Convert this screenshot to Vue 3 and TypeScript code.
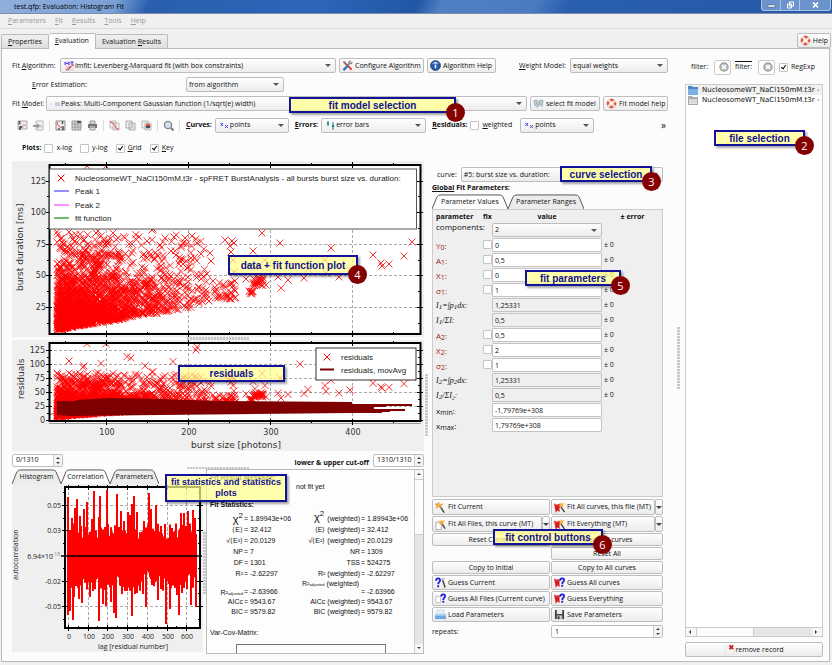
<script setup lang="ts">
import { ref } from 'vue'

interface Point { x: number; y: number }
interface Param { base: string; sub: string; rest?: string; sub2?: string; kind: 'fit' | 'calc' | 'range'; value: string }
interface Stat { label: string; sub?: string; sup?: string; value: string; label2: string; tail2?: string; value2: string; big?: boolean }

function createRandom(seed: number): () => number {
  let s = seed
  return () => {
    s = (s * 1664525 + 1013904223) % 4294967296
    return s / 4294967296
  }
}

const menus = ['Parameters', 'Fit', 'Results', 'Tools', 'Help']

// Bursts in plot coordinates, the sparse ones are listed one by one.
const outliers: number[][] = [
  [87, 166], [106, 166], [300, 212], [127, 195], [131, 198], [173, 206], [196, 180], [197, 174], [69, 205], [84, 216], [83, 219],
  [101, 210], [145, 216], [262, 233], [280, 243], [331, 248], [253, 251], [412, 242], [404, 256], [389, 264],
  [381, 263], [382, 266], [373, 255], [304, 278], [278, 277], [288, 280], [281, 288], [339, 277], [235, 281],
  [246, 279], [225, 240], [232, 241], [234, 243], [230, 246], [231, 252], [325, 260], [265, 260], [255, 267],
  [308, 269], [326, 273], [350, 270], [233, 260], [234, 272], [57, 232], [63, 244], [69, 232], [73, 239], [96, 233],
  [98, 231], [101, 236], [113, 233], [106, 245], [108, 244], [84, 240], [88, 244], [139, 237], [147, 241], [152, 230],
  [153, 229], [160, 245], [165, 238], [174, 237], [185, 238], [192, 236], [197, 243], [129, 244], [132, 244],
  [143, 255], [149, 252], [150, 255], [158, 256], [118, 252], [120, 258], [171, 251], [176, 255], [201, 254],
  [210, 253], [211, 261], [191, 258], [183, 264], [207, 274], [213, 281], [206, 290], [209, 301], [187, 268],
]

const points: Point[] = (() => {
  const rnd = createRandom(42)
  const list: Point[] = outliers.map(([x, y]) => ({ x, y }))
  while (list.length < 2100) {
    const x = 57 - Math.log(1 - rnd()) * 48
    if (x > 208) continue
    const floor = 330 - (x - 57) * 0.165
    const y = floor + Math.log(1 - rnd()) * (22 + (x - 57) * 0.05)
    if (y < 234) continue
    list.push({ x, y })
  }
  for (let i = 0; i < 34; i++) list.push({ x: 213 + rnd() * 24, y: 282 + rnd() * 17 })
  for (let i = 0; i < 26; i++) list.push({ x: 253 + rnd() * 13, y: 276 + rnd() * 12 })
  for (let i = 0; i < 8; i++) list.push({ x: 248 + rnd() * 5, y: 290 + rnd() * 4 })
  for (let i = 0; i < 30; i++) list.push({ x: 78 + rnd() * 22, y: 250 + rnd() * 16 })
  for (let i = 0; i < 10; i++) list.push({ x: 64 + rnd() * 12, y: 247 + rnd() * 20 })
  return list
})()

function crosses(list: Point[], r: number): string {
  return list
    .map(({ x, y }) => `M${(x - r).toFixed(1)} ${(y - r).toFixed(1)}l${2 * r} ${2 * r}m0 ${-2 * r}l${-2 * r} ${2 * r}`)
    .join('')
}

const burstPath = crosses(points, 3.5)
const residualPath = crosses(points.map(({ x, y }) => ({ x, y: 420.5 - (338.5 - y) * 0.4455 })), 3.5)

const correlationPath = (() => {
  const rnd = createRandom(7)
  let d = ''
  for (let x = 69; x < 197; x += 1) {
    d += `M${x} ${(542 - rnd() * 18).toFixed(1)}V${(570 + rnd() * 22).toFixed(1)}`
  }
  const up: number[][] = [[68, 498], [72, 519], [75, 509], [77, 500], [80, 517], [84, 510], [87, 503], [92, 520], [94, 492], [99, 518],
    [100, 497], [107, 491], [117, 495], [119, 528], [121, 512], [124, 522], [128, 513], [130, 516], [132, 505], [134, 497], [137, 513],
    [144, 522], [149, 494], [151, 510], [156, 506], [161, 527], [170, 529], [172, 529], [181, 514], [184, 514], [188, 512], [193, 511], [195, 519]]
  const down: number[][] = [[68, 616], [70, 612], [73, 621], [74, 598], [79, 600], [82, 604], [87, 587], [90, 598], [99, 622], [103, 605],
    [106, 607], [111, 603], [114, 614], [116, 619], [122, 595], [125, 592], [132, 617], [135, 595], [137, 594], [143, 595], [146, 608],
    [152, 586], [158, 601], [166, 625], [170, 610], [177, 596], [179, 616], [182, 594], [191, 606], [196, 608]]
  for (const [x, y] of up) d += `M${x} 557V${y}`
  for (const [x, y] of down) d += `M${x} 557V${y}`
  return d
})()

const xMajor = [106, 188, 270, 352]
const xMinor = [65, 147, 229, 311, 393]
const xLabels = [100, 200, 300, 400]
const burstTicks = [{ y: 181, t: '125' }, { y: 212, t: '100' }, { y: 244, t: '75' }, { y: 275, t: '50' }, { y: 307, t: '25' }]
const burstMinor = [196, 228, 260, 291, 323]
const residualTicks = [{ y: 350, t: '125' }, { y: 364, t: '100' }, { y: 378, t: '75' }, { y: 392, t: '50' }, { y: 406, t: '25' }, { y: 420, t: '0' }]
const residualMinor = [357, 371, 385, 399, 413]
const lagTicks = [0, 1, 2, 3, 4, 5, 6].map((n) => ({ x: 68 + Math.round(n * 19.7), t: String(n * 100) }))
const corrTicks = [{ y: 506, t: '0.05' }, { y: 531, t: '0.03' }, { y: 582, t: '-0.02' }, { y: 607, t: '-0.05' }]
const corrMinor = [493, 519, 544, 569, 594, 620]

const params = ref<Param[]>([
  { base: 'Y', sub: '0', rest: ':', kind: 'fit', value: '0' },
  { base: 'A', sub: '1', rest: ':', kind: 'fit', value: '0,5' },
  { base: 'X', sub: '1', rest: ':', kind: 'fit', value: '0' },
  { base: 'σ', sub: '1', rest: ':', kind: 'fit', value: '1' },
  { base: 'I', sub: '1', rest: '=∫p', sub2: '1', kind: 'calc', value: '1,25331' },
  { base: 'I', sub: '1', rest: '/ΣI:', kind: 'calc', value: '0,5' },
  { base: 'A', sub: '2', rest: ':', kind: 'fit', value: '0,5' },
  { base: 'X', sub: '2', rest: ':', kind: 'fit', value: '2' },
  { base: 'σ', sub: '2', rest: ':', kind: 'fit', value: '1' },
  { base: 'I', sub: '2', rest: '=∫p', sub2: '2', kind: 'calc', value: '1,25331' },
  { base: 'I', sub: '2', rest: '/ΣI₂:', kind: 'calc', value: '0,5' },
  { base: 'x', sub: 'min', rest: ':', kind: 'range', value: '-1,79769e+308' },
  { base: 'x', sub: 'max', rest: ':', kind: 'range', value: '1,79769e+308' },
])

const stats: Stat[] = [
  { label: 'χ', sup: '2', value: '1.89943e+06', label2: 'χ', tail2: '(weighted)', value2: '1.89943e+06', big: true },
  { label: '⟨E⟩', value: '32.412', label2: '⟨E⟩', tail2: '(weighted)', value2: '32.412' },
  { label: '√⟨E²⟩', value: '20.0129', label2: '√⟨E²⟩', tail2: '(weighted)', value2: '20.0129' },
  { label: 'NP', value: '7', label2: 'NR', value2: '1309' },
  { label: 'DF', value: '1301', label2: 'TSS', value2: '524275' },
  { label: 'R²', value: '-2.62297', label2: 'R²', tail2: '(weighted)', value2: '-2.62297' },
  { label: 'R²', sub: 'adjusted', value: '-2.63966', label2: 'R²', tail2: '(weighted)', value2: '-2.63966' },
  { label: 'AICc', value: '9543.67', label2: 'AICc', tail2: '(weighted)', value2: '9543.67' },
  { label: 'BIC', value: '9579.82', label2: 'BIC', tail2: '(weighted)', value2: '9579.82' },
]

const actions = [
  { text: 'Fit Current', icon: 'wand', menu: false },
  { text: 'Fit All curves, this file (MT)', icon: 'wand-red', menu: true },
  { text: 'Fit All Files, this curve (MT)', icon: 'wand-file', menu: true },
  { text: 'Fit Everything (MT)', icon: 'wand-red', menu: true },
  { text: 'Reset Current', icon: '', menu: false },
  { text: 'Reset All curves', icon: '', menu: false },
  { text: '', icon: '', menu: false },
  { text: 'Reset All', icon: '', menu: false },
  { text: 'Copy to Initial', icon: '', menu: false },
  { text: 'Copy to All curves', icon: '', menu: false },
  { text: 'Guess Current', icon: 'guess', menu: false },
  { text: 'Guess All curves', icon: 'guess-red', menu: false },
  { text: 'Guess All Files (Current curve)', icon: 'guess-file', menu: false },
  { text: 'Guess Everything', icon: 'guess-red', menu: false },
  { text: 'Load Parameters', icon: 'load', menu: false },
  { text: 'Save Parameters', icon: 'save', menu: false },
]

const tools = ['disk-plot', 'sheet-plot', '', 'disk-curve', 'disk-grid', 'printer', '', 'page-curve', 'pages', 'page-color', '', 'lens', '']
const toolNames: Record<string, string> = {
  'disk-plot': 'Save data', 'sheet-plot': 'Export data', 'disk-curve': 'Save plot', 'disk-grid': 'Save table',
  printer: 'Print', 'page-curve': 'Copy plot', pages: 'Copy data', 'page-color': 'Copy image', lens: 'Zoom',
}
const files = [{ name: 'NucleosomeWT_NaCl150mM.t3r -', icon: 'folder-blue' }, { name: 'NucleosomeWT_NaCl150mM.t3r -', icon: 'folder-gray' }]
const xlog = ref(false)
const ylog = ref(false)
const grid = ref(true)
const key = ref(true)
const weighted = ref(false)
const regexp = ref(true)
</script>

<template>
  <div class="window">
    <svg class="sprite" aria-hidden="true">
      <symbol id="app" viewBox="0 0 10 10"><rect width="10" height="10" fill="#f6eef6" /><path d="M1 9L4 6L6 7L9 1" fill="none" stroke="#e0305a" stroke-width="1.3" /><path d="M1 4L4 5L9 4" fill="none" stroke="#8a7ae0" /></symbol>
      <symbol id="algo" viewBox="0 0 11 10"><path d="M1 0h9v10H1z" fill="#f6d9de" /><path d="M1 4V1l2 2l2-2v3M6.500 1h3M8 1v3" fill="none" stroke="#3a3ae8" /><path d="M2 9C4 9 4 6 6 6S7 4 10 4M4 9.500L7 5" fill="none" stroke="#985070" /></symbol>
      <symbol id="model" viewBox="0 0 11 10"><path d="M5 4h5M5 6h5" stroke="#88aad8" /><path d="M1 4v2" stroke="#ccc" /></symbol>
      <symbol id="config" viewBox="0 0 12 12"><path d="M2 2L10.500 10.500" stroke="#d63a35" stroke-width="2" /><path d="M1 2L2.500 1L4.500 3L3 4.500z" fill="#888" /><path d="M9.500 .8L7.500 2.500V4H9.500L11.300 2.500M8.500 3.500L5.500 6.500" fill="none" stroke="#777" stroke-width="1.300" /><path d="M6 6.500L1.500 11" stroke="#3470c8" stroke-width="2.500" /></symbol>
      <symbol id="info" viewBox="0 0 12 12"><circle cx="6" cy="6" r="5.300" fill="#2857a8" stroke="#183c78" /><path d="M2 4Q6-1 10 4Q6 6 2 4" fill="#6d98dc" /><path d="M6 5.500V9M6 2.500V4" stroke="#fff" stroke-width="1.700" /></symbol>
      <symbol id="select" viewBox="0 0 12 12"><path d="M1 3l1 5l3 2l2-3l3 2l1-6l-3-1l-2 3l-2-3z" fill="#c3d5e5" stroke="#8598a8" stroke-width=".8" /><path d="M3 4l2 4M8.500 4L7 7" stroke="#b59d5f" /></symbol>
      <symbol id="buoy" viewBox="0 0 12 12"><circle cx="6" cy="6" r="3.800" fill="none" stroke="#f3e8e2" stroke-width="2.600" /><circle cx="6" cy="6" r="3.800" fill="none" stroke="#e8562c" stroke-width="2.600" stroke-dasharray="3.600 2.369" stroke-dashoffset="1.800" /><circle cx="6" cy="6" r="5.200" fill="none" stroke="#b88" stroke-width=".4" /></symbol>
      <symbol id="disk-plot" viewBox="0 0 11 11"><path d="M1 1h9v8H1z" fill="#eee" stroke="#aaa" /><path d="M2.500 1v3.500M2.500 7h3M3 10V7" stroke="#555" stroke-width="1.800" /><path d="M5 5h4M5 7l4-2" stroke="#daa" /></symbol>
      <symbol id="sheet-plot" viewBox="0 0 11 11"><path d="M3 1h7v9H3z" fill="#f2f2f2" stroke="#bbb" /><path d="M0 5h4V3l3 3l-3 3V7H0z" fill="#999" /><path d="M6 5l3 2" stroke="#c88" /></symbol>
      <symbol id="disk-curve" viewBox="0 0 11 11"><path d="M1 1h9v9H1z" fill="#eee" stroke="#888" /><path d="M2 2q1 5 3 5t4 3" fill="none" stroke="#d55" /><path d="M7.500 1v3M8 6v4M4 8v2" stroke="#555" stroke-width="1.500" /></symbol>
      <symbol id="disk-grid" viewBox="0 0 11 11"><path d="M1 1h9v9H1z" fill="#ddd" stroke="#999" /><path d="M1 4h9M4 1v9M7 4v6M1 7h9" stroke="#999" /><path d="M6 2h4" stroke="#555" stroke-width="2" /></symbol>
      <symbol id="printer" viewBox="0 0 11 11"><path d="M3 1h5v3H3zM3 7h5v3H3z" fill="#ddd" stroke="#999" /><path d="M1 4h9v4H1z" fill="#777" /><path d="M3 7h5" stroke="#ddd" /></symbol>
      <symbol id="page-curve" viewBox="0 0 11 11"><path d="M1 1h6v7H1zM4 3h6v7H4z" fill="#f2f2f2" stroke="#bbb" /><path d="M1 2q4 0 5 4t4 3" fill="none" stroke="#e44" /></symbol>
      <symbol id="pages" viewBox="0 0 11 11"><path d="M1 1h6v7H1zM4 3h6v7H4z" fill="#eee" stroke="#aaa" /><path d="M5 5h4M5 7h4" stroke="#ccc" /></symbol>
      <symbol id="page-color" viewBox="0 0 11 11"><path d="M1 1h6v7H1zM4 3h6v7H4z" fill="#f2f2f2" stroke="#bbb" /><path d="M4.500 6a2.500 2.500 0 0 1 5 0z" fill="#e55a22" /><path d="M4.500 6a2.500 2.500 0 0 0 5 0z" fill="#446" /></symbol>
      <symbol id="lens" viewBox="0 0 11 11"><circle cx="5" cy="5" r="3.600" fill="#cfe0f5" stroke="#888" stroke-width="1.400" /><path d="M8 8l2.500 2.500" stroke="#777" stroke-width="2" /></symbol>
      <symbol id="points" viewBox="0 0 11 10"><path d="M1.500 2l2.500 3M4 2L1.500 5M6 4l3 3M9 4L6 7" stroke="#4646e8" fill="none" /></symbol>
      <symbol id="bars" viewBox="0 0 11 10"><path d="M3 0v5M8 1v8" stroke="#188080" /><path d="M2 2.500h2M7 5h2" stroke="#188080" stroke-width="2" /></symbol>
      <symbol id="clear" viewBox="0 0 10 10"><circle cx="5" cy="5" r="4.700" fill="#999" /><circle cx="5" cy="5" r="3.500" fill="#c4c4c4" /><path d="M3.200 3.200l3.600 3.600m0-3.600L3.200 6.800" stroke="#fff" stroke-width="1.400" /></symbol>
      <symbol id="folder-blue" viewBox="0 0 10 9"><path d="M0 0h4l1 1h5v8H0z" fill="#4e86c0" /><path d="M0 3h10v6H0z" fill="#7cb0e2" /></symbol>
      <symbol id="folder-gray" viewBox="0 0 10 9"><path d="M0 0h4l1 1h5v8H0z" fill="#aaa" /><path d="M1 3h8v5H1z" fill="#e4e4e4" /><path d="M1 4h8M1 6h8" stroke="#bbb" stroke-width=".5" /></symbol>
      <symbol id="wand" viewBox="0 0 12 12"><path d="M5 4l5 7.500" stroke="#444" stroke-width="1.600" /><path d="M4 0l1 3l4-1l-3 2l1 3l-3-2l-3 2l1-3l-2-2h3z" fill="#f2b23c" stroke="#d08332" stroke-width=".5" /></symbol>
      <symbol id="wand-red" viewBox="0 0 12 12"><path d="M6.500 4l5 7" stroke="#444" stroke-width="1.500" /><path d="M7.500 0l1 2l3-1l-2 3l2 2L8.500 5L6 7V4L4 2h3z" fill="#efb247" /><path d="M0 1.500l3 1.500l3-1v9l-2-2l-2 3z" fill="#e62424" /><path d="M2 5l4 5M2 9l4-4" stroke="#911" stroke-width=".7" /></symbol>
      <symbol id="wand-file" viewBox="0 0 12 12"><path d="M1 3.500h4l2 2v6H1z" fill="#fff" stroke="#aaa" /><path d="M7 4l4 6.500" stroke="#444" stroke-width="1.500" /><path d="M7 0l1 2l3-1l-2 3l1 3l-3-2l-2 2V4L4 2h3z" fill="#efb247" /></symbol>
      <symbol id="guess" viewBox="0 0 12 12"><path d="M8 2l3 9.500" stroke="#444" stroke-width="1.600" /><path d="M6.500 2l4-1l-1 3" fill="#ddd" stroke="#aaa" stroke-width=".5" /><path d="M1.200 4.200C1.200 .8 5.500 .8 5.500 3.500S3.500 5 3.500 8M3.500 9v2.200" fill="none" stroke="#1b22df" stroke-width="2" /></symbol>
      <symbol id="guess-red" viewBox="0 0 12 12"><path d="M0 1.500l3 1.500l3-1v9l-2-2l-2 3z" fill="#e62424" /><path d="M2 5l4 5M2 9l4-4" stroke="#911" stroke-width=".7" /><path d="M6.700 4C6.700 .8 11 .8 11 3.300S9 4.700 9 7.500M9 8.500v2.200" fill="none" stroke="#1b22df" stroke-width="2" /></symbol>
      <symbol id="guess-file" viewBox="0 0 12 12"><path d="M1 3.500h3l2 2v5H1z" fill="#fff" stroke="#bbb" /><path d="M6.700 4C6.700 .8 11 .8 11 3.300S9 4.700 9 7.500M9 8.500v2.200" fill="none" stroke="#1b22df" stroke-width="2" /></symbol>
      <symbol id="load" viewBox="0 0 12 12"><path d="M2 1h8v6H2z" fill="#e6eef5" stroke="#b5c3cf" stroke-width=".5" /><path d="M0 6h12v5H0z" fill="#6fa9e0" /><path d="M0 6h12v1.500H0z" fill="#a9cff2" /></symbol>
      <symbol id="save" viewBox="0 0 12 12"><path d="M1 1h10v10H1z" fill="#3c4048" /><path d="M3 1h6v4.500H3z" fill="#e8e8ee" /><path d="M3 7h6v4H3z" fill="#c5c8cf" /><path d="M4 8h2v3H4z" fill="#333" /></symbol>
      <symbol id="remove" viewBox="0 0 12 12"><path d="M1 2h6l4 4v5H1z" fill="#f2f2f2" stroke="#ddd" stroke-width=".5" /><path d="M6 1.500l4 4m0-4l-4 4" stroke="#d21f1f" stroke-width="2" /></symbol>
    </svg>

    <header class="titlebar">
      <svg class="app-icon"><use href="#app" /></svg>
      <h1>test.qfp: Evaluation: Histogram Fit</h1>
      <div class="window-buttons">
        <button aria-label="Minimize"><svg viewBox="0 0 9 8"><rect x="1" y="4" width="7" height="2" fill="#fff" stroke="#445" stroke-width=".4" /></svg></button>
        <button aria-label="Restore"><svg viewBox="0 0 9 8"><path d="M3.500 1h4v4h-4zM1.500 3h4v4h-4z" fill="none" stroke="#fff" /></svg></button>
        <button class="close" aria-label="Close"><svg viewBox="0 0 9 8"><path d="M2 1.500l5 5m0-5l-5 5" stroke="#fff" stroke-width="1.700" /></svg></button>
      </div>
    </header>

    <nav class="menubar">
      <a v-for="m in menus" :key="m" href="#"><u>{{ m[0] }}</u>{{ m.slice(1) }}</a>
    </nav>

    <div class="tabs">
      <button class="tab"><u>P</u>roperties</button>
      <button class="tab active"><u>E</u>valuation</button>
      <button class="tab">Evaluation <u>R</u>esults</button>
      <button class="btn help"><svg class="icon"><use href="#buoy" /></svg>Help</button>
    </div>

    <main class="page">
      <section class="evaluation">
        <div class="row algorithm">
          <label for="algorithm">Fit <u>A</u>lgorithm:</label>
          <span class="combo grow with-icon"><svg class="combo-icon"><use href="#algo" /></svg><select id="algorithm"><option>lmfit: Levenberg-Marquard fit (with box constraints)</option></select></span>
          <button class="btn configure"><svg class="icon"><use href="#config" /></svg>Configure Algorithm</button>
          <button class="btn algorithm-help"><svg class="icon"><use href="#info" /></svg>Algorithm Help</button>
          <label class="weight-label" for="weight"><u>W</u>eight Model:</label>
          <span class="combo wide"><select id="weight"><option>equal weights</option></select></span>
        </div>
        <div class="row estimation">
          <label for="estimation"><u>E</u>rror Estimation:</label>
          <span class="combo wide"><select id="estimation"><option>from algorithm</option></select></span>
        </div>
        <div class="row model">
          <label for="model-select">Fit <u>M</u>odel:</label>
          <span class="combo grow with-icon"><svg class="combo-icon"><use href="#model" /></svg><select id="model-select"><option>Peaks: Multi-Component Gaussian function (1/sqrt(e) width)</option></select></span>
          <button class="btn select-model"><svg class="icon"><use href="#select" /></svg>select fit model</button>
          <button class="btn model-help"><svg class="icon"><use href="#buoy" /></svg>Fit model help</button>
        </div>
        <div class="row plotbar">
          <div class="tools">
            <template v-for="(t, i) in tools" :key="i">
              <button v-if="t" class="tool" :aria-label="toolNames[t]"><svg><use :href="'#' + t" /></svg></button>
              <i v-else class="rule"></i>
            </template>
          </div>
          <label class="strong" for="curves"><u>C</u>urves:</label>
          <span class="combo with-icon curves"><svg class="combo-icon"><use href="#points" /></svg><select id="curves"><option>points</option></select></span>
          <label class="strong" for="errors"><u>E</u>rrors:</label>
          <span class="combo with-icon errors"><svg class="combo-icon"><use href="#bars" /></svg><select id="errors"><option>error bars</option></select></span>
          <label class="strong" for="residuals"><u>R</u>esiduals:</label>
          <label class="check weighted"><input v-model="weighted" type="checkbox" /><span><u>w</u>eighted</span></label>
          <span class="combo with-icon curves"><svg class="combo-icon"><use href="#points" /></svg><select id="residuals"><option>points</option></select></span>
          <button class="more" aria-label="More">»</button>
        </div>
        <div class="row plots">
          <b>Plots:</b>
          <label class="check"><input v-model="xlog" type="checkbox" />x-log</label>
          <label class="check"><input v-model="ylog" type="checkbox" />y-log</label>
          <label class="check"><input v-model="grid" type="checkbox" /><span><u>G</u>rid</span></label>
          <label class="check"><input v-model="key" type="checkbox" /><span><u>K</u>ey</span></label>
        </div>

        <div class="workspace">
          <div class="graphs">
            <svg class="plot" viewBox="12 161 412 176">
              <defs><clipPath id="burst-clip"><rect x="49" y="165" width="371" height="169" /></clipPath></defs>
              <rect x="12" y="161" width="412" height="176" fill="#efefef" />
              <rect x="49" y="165" width="371" height="169" fill="#fff" />
              <g class="gridlines">
                <path v-for="x in xMajor" :key="x" :d="`M${x}.5 165V334`" />
                <path v-for="t in burstTicks" :key="t.y" :d="`M49 ${t.y}.5H420`" />
              </g>
              <path :d="burstPath" class="crosses" clip-path="url(#burst-clip)" />
              <rect x="49.500" y="165" width="371" height="169" class="frame" />
              <g class="ticks">
                <path v-for="x in xMajor" :key="x" :d="`M${x}.5 162v6m0 163v6`" />
                <path v-for="x in xMinor" :key="x" :d="`M${x}.5 163v3m0 166v3`" />
                <path v-for="t in burstTicks" :key="t.y" :d="`M46 ${t.y}.5h6m365 0h6`" />
                <path v-for="y in burstMinor" :key="y" :d="`M47 ${y}.5h3m368 0h3`" />
              </g>
              <rect x="49.500" y="169" width="367" height="60" fill="#fff" stroke="#555" />
              <path d="M57.500 174.500l7 7m0-7l-7 7" class="marker" />
              <path d="M54 191h15" stroke="#5656ff" stroke-width="1.300" /><path d="M54 205h15" stroke="#ff56ff" stroke-width="1.300" /><path d="M54 218h15" stroke="#209a20" stroke-width="1.300" />
              <g class="legend">
                <text x="75" y="181">NucleosomeWT_NaCl150mM.t3r - spFRET BurstAnalysis - all bursts burst size vs. duration:</text>
                <text x="75" y="194">Peak 1</text><text x="75" y="208">Peak 2</text><text x="75" y="221">fit function</text>
              </g>
              <g class="axis end"><text v-for="t in burstTicks" :key="t.y" x="46" :y="t.y + 3">{{ t.t }}</text></g>
              <text class="axis-title" transform="translate(23 291) rotate(-90)">burst duration [ms]</text>
            </svg>
            <i class="grip horizontal"></i>
            <svg class="plot" viewBox="12 340 412 111">
              <defs><clipPath id="residual-clip"><rect x="49" y="343" width="371" height="78" /></clipPath></defs>
              <rect x="12" y="340" width="412" height="111" fill="#efefef" />
              <rect x="49" y="343" width="371" height="78" fill="#fff" />
              <g class="gridlines">
                <path v-for="x in xMajor" :key="x" :d="`M${x}.5 343V421`" />
                <path v-for="t in residualTicks" :key="t.y" :d="`M49 ${t.y}.5H420`" />
              </g>
              <path :d="residualPath" class="crosses" clip-path="url(#residual-clip)" />
              <path d="M57 401H76V400L110 398L160 399L220 401L352 402V404H412V406H386V407H374V409H405V411H390V412H382V413H350L160 415L70 416L57 415V413L49 415V414L57 413z" fill="#7f0000" />
              <rect x="49.500" y="343" width="371" height="78" class="frame" />
              <path d="M49 423.500H421" stroke="#999" />
              <g class="ticks">
                <path v-for="x in xMajor" :key="x" :d="`M${x}.5 340v6m0 73v6`" />
                <path v-for="x in xMinor" :key="x" :d="`M${x}.5 341v3m0 76v3`" />
                <path v-for="t in residualTicks" :key="t.y" :d="`M46 ${t.y}.5h6m365 0h6`" />
                <path v-for="y in residualMinor" :key="y" :d="`M47 ${y}.5h3m368 0h3`" />
              </g>
              <rect x="316" y="348" width="100" height="32" fill="#fff" stroke="#333" />
              <path d="M323.500 353.500l7 7m0-7l-7 7" class="marker" /><path d="M320 369.500h14" stroke="#7f0000" stroke-width="2" />
              <g class="legend"><text x="341" y="360">residuals</text><text x="341" y="373">residuals, movAvg</text></g>
              <g class="axis end"><text v-for="t in residualTicks" :key="t.y" x="45" :y="t.y + 3">{{ t.t }}</text></g>
              <g class="axis middle"><text v-for="(x, i) in xMajor" :key="x" :x="x + 1" y="435">{{ xLabels[i] }}</text></g>
              <text class="axis-title middle" x="236" y="448">burst size [photons]</text>
              <text class="axis-title" transform="translate(24 399) rotate(-90)">residuals</text>
            </svg>

            <div class="cutoff">
              <span class="spin"><input type="text" value="0/1310" aria-label="lower cut-off" /><i></i></span>
              <b>lower &amp; upper cut-off</b>
              <span class="spin"><input type="text" value="1310/1310" aria-label="upper cut-off" /><i></i></span>
            </div>

            <i class="grip horizontal low"></i>
            <div class="statistics">
              <div class="stat-plots">
                <div class="slant-tabs">
                  <button class="slant" v-for="(t, i) in ['Histogram', 'Correlation', 'Parameters']" :key="t" :class="{ active: i === 1 }">
                    <svg viewBox="0 0 50 16" preserveAspectRatio="none"><path d="M0 16L5 3Q6 1 9 1H41Q44 1 45 3L50 16" /></svg><span>{{ t }}</span>
                  </button>
                </div>
                <svg class="plot" viewBox="12 485 191 168">
                  <rect x="12" y="485" width="191" height="168" fill="#efefef" />
                  <rect x="65" y="488" width="135" height="141" fill="#fff" />
                  <g class="gridlines">
                    <path v-for="t in lagTicks" :key="t.x" :d="`M${t.x}.5 488V629`" />
                    <path v-for="t in corrTicks" :key="t.y" :d="`M65 ${t.y}.5H200`" />
                  </g>
                  <path :d="correlationPath" stroke="#f00" stroke-width="2" />
                  <rect x="65" y="488" width="135" height="141" class="frame" />
                  <path d="M61 557H202" stroke="#000" stroke-width="1.500" />
                  <g class="ticks">
                    <path v-for="t in lagTicks" :key="t.x" :d="`M${t.x}.5 486v5m0 135v6`" />
                    <path v-for="t in lagTicks.slice(1)" :key="t.x" :d="`M${t.x - 10}.5 486v3m0 138v3`" />
                    <path v-for="t in corrTicks" :key="t.y" :d="`M62 ${t.y}.5h6m129 0h6`" />
                    <path v-for="y in corrMinor" :key="y" :d="`M63 ${y}.5h3m132 0h3`" />
                  </g>
                  <g class="small-axis end">
                    <text v-for="t in corrTicks" :key="t.y" x="61" :y="t.y + 3">{{ t.t }}</text>
                    <text x="53" y="560">6.94×10</text><text x="60" y="557" class="power">-18</text>
                  </g>
                  <g class="small-axis middle">
                    <text v-for="t in lagTicks" :key="t.x" :x="t.x + 1" y="640">{{ t.t }}</text>
                    <text x="133" y="650">lag [residual number]</text>
                  </g>
                  <text class="small-axis" transform="translate(18 581) rotate(-90)">autocorrelation</text>
                </svg>
              </div>
              <i class="grip vertical stat-grip"></i>
              <div class="report">
                <div class="report-text">
                  <b>Fit Result Message:</b>
                  <p class="message">not fit yet</p>
                  <b>Fit Statistics:</b>
                  <table class="figures">
                    <tbody>
                      <tr v-for="s in stats" :key="s.label + s.value" :class="{ big: s.big, adjusted: s.sub }">
                        <th>{{ s.label }}<sup v-if="s.sup">2</sup><sub v-if="s.sub">{{ s.sub }}</sub></th>
                        <td>= {{ s.value }}</td>
                        <th>{{ s.label2 }}<sup v-if="s.sup">2</sup><sub v-if="s.sub">{{ s.sub }}</sub> <small>{{ s.tail2 }}</small></th>
                        <td>= {{ s.value2 }}</td>
                      </tr>
                    </tbody>
                  </table>
                  <p class="matrix-title">Var-Cov-Matrix:</p>
                  <div class="matrix"></div>
                </div>
                <div class="scroll"><i class="up"></i><i class="thumb"></i><i class="down"></i></div>
              </div>
            </div>
          </div>

          <i class="grip vertical"></i>

          <div class="fit-column">
            <div class="row curve">
              <label for="curve">curve:</label>
              <span class="combo grow"><select id="curve"><option>#5: burst size vs. duration:</option></select></span>
            </div>
            <b class="heading"><u>Global</u> Fit Parameters:</b>
            <div class="slant-tabs">
              <button class="slant active"><svg viewBox="0 0 76 16" preserveAspectRatio="none"><path d="M0 16L5 3Q6 1 9 1H67Q70 1 71 3L76 16" /></svg><span>Parameter Values</span></button>
              <button class="slant"><svg viewBox="0 0 76 16" preserveAspectRatio="none"><path d="M0 16L5 3Q6 1 9 1H67Q70 1 71 3L76 16" /></svg><span>Parameter Ranges</span></button>
            </div>
            <div class="panel">
              <div class="param head"><b>parameter</b><b>fix</b><b class="center">value</b><b class="center">± error</b></div>
              <div class="param components">
                <label for="components">components:</label>
                <span class="combo"><select id="components"><option>2</option></select></span>
              </div>
              <div v-for="(p, i) in params" :key="i" class="param" :class="p.kind">
                <label :for="'param' + i">{{ p.base }}<sub>{{ p.sub }}</sub>{{ p.rest }}<template v-if="p.sub2"><sub>{{ p.sub2 }}</sub>dx:</template></label>
                <input v-if="p.kind === 'fit'" type="checkbox" :aria-label="'fix ' + p.base + p.sub" />
                <span v-else></span>
                <input :id="'param' + i" v-model="p.value" type="text" :readonly="p.kind === 'calc'" />
                <span v-if="p.kind !== 'range'" class="error">± 0</span>
              </div>
            </div>
            <div class="actions">
              <template v-for="(a, i) in actions" :key="i">
                <span v-if="!a.text"></span>
                <span v-else class="action" :class="{ plain: !a.icon }">
                  <button class="btn"><svg v-if="a.icon" class="icon"><use :href="'#' + a.icon" /></svg>{{ a.text }}</button>
                  <button v-if="a.menu" class="btn drop" :aria-label="a.text + ' options'"><i></i></button>
                </span>
              </template>
            </div>
            <div class="repeats">
              <label for="repeats">repeats:</label>
              <span class="spin"><input id="repeats" type="text" value="1" /><i></i></span>
            </div>
          </div>
        </div>
      </section>

      <i class="grip vertical main-grip"></i>

      <aside class="files">
        <div class="filters">
          <label for="filter">filter:</label>
          <span class="filter"><input id="filter" type="text" /><svg><use href="#clear" /></svg></span>
          <label class="negated" for="not-filter">filter:</label>
          <span class="filter"><input id="not-filter" type="text" /><svg><use href="#clear" /></svg></span>
          <label class="check"><input v-model="regexp" type="checkbox" />RegExp</label>
        </div>
        <div class="list">
          <ul>
            <li v-for="(f, i) in files" :key="i" :class="{ selected: i === 0 }"><svg><use :href="'#' + f.icon" /></svg>{{ f.name }}</li>
          </ul>
          <div class="hscroll"><i class="left"></i><i class="thumb"></i><i class="right"></i></div>
        </div>
        <button class="btn remove"><svg class="icon"><use href="#remove" /></svg>remove record</button>
      </aside>
    </main>

    <div class="note model-note">fit model selection<em>1</em></div>
    <div class="note file-note">file selection<em>2</em></div>
    <div class="note curve-note">curve selection<em>3</em></div>
    <div class="note plot-note">data + fit function plot<em>4</em></div>
    <div class="note param-note">fit parameters<em>5</em></div>
    <div class="note button-note">fit control buttons<em>6</em></div>
    <div class="note residual-note">residuals</div>
    <div class="note stat-note">fit statistics and statistics plots</div>
  </div>
</template>

<style>
body { background: #f0f0f0; }
</style>

<style scoped>
.window { position: relative; min-height: 100vh; display: flex; flex-direction: column; box-sizing: border-box; padding-bottom: 3px; background: #f0f0f0; font: 7px/10px "Open Sans", "Noto Sans", sans-serif; color: #111; overflow: hidden; }
.window *, .window *::before, .window *::after { box-sizing: border-box; }
.sprite { position: absolute; width: 0; height: 0; }
button, input, select { font: inherit; color: inherit; margin: 0; padding: 0; border: 0; background: none; outline: 0; }
i { display: block; }
label, b { white-space: nowrap; }
p { margin: 0; }

.titlebar { display: flex; align-items: center; height: 14px; gap: 4px; border-bottom: 1px solid #7d8ea8; background: linear-gradient(115deg, #8faedb 0, #7ba0d6 14%, #2a5fae 18%, #2d66b8 38%, #2257a6 50%, #5080c4 53%, #4a7ac0 64%, #2a5faf 68%, #2559a6 100%); }
.app-icon { width: 10px; height: 10px; }
h1 { flex: 1; margin: 0; font-size: 7px; line-height: 10px; font-weight: 400; color: #000; }
.window-buttons { display: flex; align-self: flex-start; height: 11px; border: 1px solid #a9c3e4; border-top: 0; border-radius: 0 0 3px 3px; background: #6d93cc; margin-right: 1px; }
.window-buttons button { width: 19px; display: flex; align-items: center; justify-content: center; border-right: 1px solid #a9c3e4; }
.window-buttons .close { width: 30px; border: 0; }
.window-buttons svg { width: 9px; height: 8px; }

.menubar { display: flex; align-items: center; gap: 9px; height: 15px; padding-left: 8px; border-bottom: 1px solid #ddd; }
.menubar a { color: #9a9a9a; text-decoration: none; }

.tabs { display: flex; align-items: flex-end; height: 19px; padding: 0 1px; }
.tab { height: 14px; padding: 0 6px; border: 1px solid #bbb; border-bottom: 0; border-left-width: 0; background: linear-gradient(#f0f0f0, #dedede); border-radius: 2px 2px 0 0; }
.tab:first-child { border-left-width: 1px; }
.tab.active { height: 16px; margin-bottom: -1px; position: relative; background: #fcfcfc; padding-bottom: 2px; }
.help { height: 15px; margin-left: auto; padding: 0 5px 0 2px; }

.page { flex: 1; display: flex; margin: 0 2px 0 1px; padding: 9px 6px 4px 10px; border: 1px solid #bbb; background: #fcfcfc; }
.evaluation { flex: 1; min-width: 0; display: flex; flex-direction: column; }
.row { display: flex; align-items: center; gap: 3px; height: 15px; margin-bottom: 4px; }
.btn { display: flex; align-items: center; gap: 2px; height: 15px; padding: 0 2px; border: 1px solid #bdbdbd; border-radius: 2px; background: linear-gradient(#fefefe, #ececec); white-space: nowrap; }
.icon { width: 11px; height: 11px; flex: none; }
.combo { position: relative; display: flex; height: 15px; border: 1px solid #bdbdbd; border-radius: 2px; background: linear-gradient(#fefefe, #ececec); }
.combo select { appearance: none; width: 100%; height: 100%; padding: 0 12px 0 2px; }
.combo::after { content: ""; position: absolute; right: 4px; top: 5px; border: 3px solid transparent; border-top-color: #555; border-bottom: 0; }
.with-icon select { padding-left: 14px; }
.combo-icon { position: absolute; left: 3px; top: 2px; width: 11px; height: 10px; }
.grow { flex: 1; }
.wide { width: 98px; }
.algorithm label:first-child { width: 45px; }
.configure { width: 85px; }
.algorithm-help { width: 69px; }
.row .weight-label { width: 48px; margin-left: 20px; }
.estimation { padding-left: 20px; }
.estimation label { width: 151px; }
.model label { width: 31px; }
.select-model { width: 70px; }
.model-help { width: 65px; }
.plotbar { margin-top: 2px; height: 16px; }
.tools { display: flex; align-items: center; gap: 5px; padding-left: 5px; width: 171px; }
.tool { width: 11px; height: 11px; }
.tool svg { display: block; width: 11px; height: 11px; }
.rule { width: 1px; height: 11px; background: #ddd; }
.strong { font-weight: 700; }
.curves { width: 74px; margin-right: 3px; }
.errors { width: 105px; margin-right: 3px; }
.check { display: flex; align-items: center; gap: 3px; }
.weighted { margin-right: 5px; }
.more { margin-left: auto; font-size: 10px; padding-right: 2px; }
input[type="checkbox"] { appearance: none; position: relative; width: 9px; height: 9px; border: 1px solid #c4c4c4; border-radius: 1px; background: #fff; }
input[type="checkbox"]:checked::after { content: ""; position: absolute; left: 2px; top: 0; width: 3px; height: 5px; border: solid #111; border-width: 0 1px 1px 0; transform: rotate(35deg); }
.plots { padding-left: 10px; height: 12px; margin: 5px 0 7px; }
.plots .check { margin-right: 5px; }

.workspace { flex: 1; display: flex; padding-right: 5px; }
.graphs { flex: 1; min-width: 0; display: flex; flex-direction: column; }
.plot { display: block; width: 100%; height: auto; overflow: hidden; }
.grip { flex: none; }
.grip.horizontal { height: 3px; width: 62px; align-self: center; background: repeating-linear-gradient(90deg, #c8c8c8 0 2px, #eee 2px 3px); }
.grip.low { height: 2px; }
.grip.vertical { width: 3px; height: 62px; background: repeating-linear-gradient(#c8c8c8 0 2px, #eee 2px 3px); }
.workspace > .grip.vertical { margin: 213px 2px 0 1px; }
.main-grip { align-self: center; margin: 0 5px 0 9px; }
.gridlines path { stroke: #aaa; stroke-dasharray: 3 2; }
.crosses { fill: none; stroke: #f00; stroke-width: .8; }
.marker { fill: none; stroke: #f00; stroke-width: 1; }
.frame { fill: none; stroke: #000; stroke-width: 2; }
.ticks path { stroke: #000; fill: none; }
.legend { font: 8px "Liberation Sans", sans-serif; fill: #222; }
.legend text { white-space: pre; }
.axis { font: 8px "DejaVu Sans", sans-serif; fill: #333; }
.axis-title { font: 9px "DejaVu Sans", sans-serif; fill: #333; }
.small-axis { font: 7px "Open Sans", sans-serif; fill: #222; }
.small-axis .power { font-size: 5px; fill: #888; }
.end { text-anchor: end; }
.middle { text-anchor: middle; }

.cutoff { display: flex; align-items: center; justify-content: flex-end; gap: 4px; height: 14px; margin-top: 2px; }
.cutoff .spin:first-child { margin-right: auto; }
.cutoff b { padding-top: 5px; }
.spin { position: relative; display: flex; width: 51px; height: 13px; border: 1px solid #bdbdbd; border-radius: 2px; background: #fff; }
.spin input { width: 100%; padding: 0 10px 0 3px; }
.spin i { position: absolute; right: 0; top: 0; width: 9px; height: 100%; border-left: 1px solid #ccc; background: #f3f3f3; }
.spin i::before, .spin i::after { content: ""; position: absolute; left: 2px; border: 2px solid transparent; }
.spin i::before { top: 2px; border-bottom-color: #444; border-top: 0; }
.spin i::after { bottom: 2px; border-top-color: #444; border-bottom: 0; }

.statistics { flex: 1; display: grid; grid-template-columns: minmax(0, 191fr) 3px minmax(0, 218fr); }
.stat-grip { align-self: center; }
.slant-tabs { display: flex; height: 15px; }
.slant { position: relative; height: 15px; width: 49px; }
.slant svg { position: absolute; left: 0; top: 0; width: 100%; height: 15px; fill: #ececec; stroke: #555; stroke-width: 1; }
.slant.active svg { fill: #fdfdfd; }
.slant span { position: relative; }
.report { display: flex; border: 1px solid #bbb; height: 185px; background: #fdfdfd; font-family: "Liberation Sans", sans-serif; overflow: hidden; }
.report-text { flex: 1; padding: 3px 0 0 3px; overflow: hidden; }
.report-text > b { display: block; height: 9px; line-height: 9px; }
.message { padding: 0 0 8px 86px; line-height: 10px; }
.figures { border-collapse: collapse; line-height: 10px; margin-top: 1px; }
.figures th, .figures td { padding: 0 1px 0 0; height: 11px; font-weight: 400; text-align: right; vertical-align: bottom; }
.figures th { width: 34px; white-space: nowrap; }
.figures th:nth-child(3) { width: 67px; }
.figures td { width: 50px; text-align: left; white-space: nowrap; }
.figures sup { font-size: 8px; line-height: 4px; }
.figures sub { font-size: 4px; line-height: 4px; vertical-align: baseline; }
.figures small { font-size: 7px; }
.figures .big th { font-size: 11px; height: 14px; }
.figures .adjusted th { line-height: 9px; height: 18px; }
.figures .adjusted th:nth-child(3) { white-space: normal; text-align: left; padding-left: 8px; vertical-align: top; }
.figures tr:nth-child(n + 8) > * { height: 10px; }
.matrix-title { padding-top: 11px; }
.matrix { height: 20px; margin: 6px 28px 0 26px; border: 1px solid #777; }
.scroll { position: relative; width: 9px; background: #e6e6e6; border-left: 1px solid #ccc; display: flex; flex-direction: column; }
.scroll .thumb { height: 56px; border: solid #ccc; border-width: 1px 0; background: #fcfcfc; }
.scroll .up, .scroll .down { position: relative; height: 9px; background: #f7f7f7; }
.scroll .down { margin-top: auto; }
.scroll .up::after, .scroll .down::after { content: ""; position: absolute; left: 2px; top: 3px; border: 2px solid transparent; }
.scroll .up::after { border-bottom-color: #444; border-top: 0; }
.scroll .down::after { border-top-color: #444; border-bottom: 0; }

.fit-column { width: 231px; flex: none; display: flex; flex-direction: column; padding: 6px 0 19px; margin-left: 2px; }
.curve { padding-left: 5px; margin-bottom: 0; gap: 4px; }
.heading { height: 12px; line-height: 11px; }
.fit-column .slant { width: 76px; }
.panel { flex: 1; padding: 2px 3px; border: 1px solid #ccc; background: #efefef; margin-bottom: 2px; }
.param { display: grid; grid-template-columns: 47px 9px 110px 1fr; align-items: center; height: 15px; }
.param.head { height: 10px; }
.center { text-align: center; }
.param.components .combo { grid-column: 3; height: 14px; }
.param.components label { align-self: start; grid-column: 1 / 3; line-height: 10px; }
.param input[type="text"] { height: 14px; padding: 1px 2px 0; border: 1px solid #c4c4c4; border-radius: 1px; background: #fff; }
.param.calc input[type="text"] { background: #efefef; }
.param label { font-size: 8px; align-self: end; line-height: 12px; }
.param.head b:nth-child(4) { padding-left: 4px; }
.param sub { font-size: 7px; line-height: 4px; vertical-align: -1px; }
.param.fit label { color: #9b1717; }
.param .error { padding-left: 2px; }
.param.calc label { font-family: "Liberation Serif", serif; font-style: italic; }
.actions { display: grid; grid-template-columns: 118px 1fr; grid-template-rows: 16px 16px 13px 13px 13px 15px 15px 15px; gap: 1px; }
.action { display: flex; }
.action .btn { height: 100%; flex: 1; }
.action.plain .btn { justify-content: center; }
.action .drop { flex: none; width: 8px; padding: 0; }
.drop i { border: 3px solid transparent; border-top-color: #444; border-bottom: 0; }
.repeats { display: grid; grid-template-columns: 118px 1fr; gap: 1px; margin-top: 3px; align-items: center; }
.repeats .spin { width: 100%; }

.files { width: 138px; display: flex; flex-direction: column; }
.filters { display: flex; align-items: center; gap: 3px; height: 18px; padding-left: 6px; margin-bottom: 8px; }
.filter { position: relative; width: 17px; height: 15px; margin: 0 1px 0 3px; border: 1px solid #ccc; border-radius: 2px; background: #fff; }
.filter input { width: 100%; height: 100%; padding-right: 11px; }
.filter svg { position: absolute; right: 1px; top: 1px; width: 10px; height: 10px; }
.negated { text-decoration: overline; }
.list { flex: 1; display: flex; flex-direction: column; justify-content: space-between; border: 1px solid #ccc; background: #fff; }
.list ul { list-style: none; margin: 0; padding: 0 0 0 2px; overflow: hidden; }
.list li { display: flex; align-items: center; gap: 4px; height: 10px; white-space: nowrap; font-family: "DejaVu Sans", sans-serif; }
.list li.selected { background: #f0f0f0; }
.list li svg { width: 10px; height: 9px; flex: none; }
.hscroll { display: flex; height: 9px; background: #e6e6e6; border-top: 1px solid #ccc; }
.hscroll .left, .hscroll .right { position: relative; width: 10px; background: #f7f7f7; }
.hscroll .right { margin-left: auto; }
.hscroll .thumb { width: 58px; background: #fcfcfc; border: solid #ccc; border-width: 0 1px; }
.hscroll .left::after, .hscroll .right::after { content: ""; position: absolute; left: 3px; top: 2px; border: 2px solid transparent; }
.hscroll .left::after { border-right-color: #333; border-left: 0; }
.hscroll .right::after { border-left-color: #333; border-right: 0; }
.remove { justify-content: center; gap: 0; margin-top: 5px; }

.note { position: absolute; display: flex; align-items: center; justify-content: center; text-align: center; border: 2px solid #12129a; background: rgba(255, 255, 140, .72); box-shadow: 2px 2px 2px rgba(0, 0, 0, .35); font: bold 10px/11px "Liberation Sans", sans-serif; color: #12128e; }
.note em { position: absolute; right: -11px; bottom: -11px; width: 19px; height: 19px; border-radius: 50%; background: #850000; color: #fff; font: 11px/19px "Open Sans", sans-serif; }
.model-note { left: 289px; top: 97px; width: 167px; height: 16px; }
.file-note { left: 714px; top: 130px; width: 91px; height: 16px; }
.curve-note { left: 560px; top: 166px; width: 92px; height: 16px; }
.plot-note { left: 228px; top: 255px; width: 130px; height: 20px; }
.param-note { left: 525px; top: 270px; width: 96px; height: 16px; }
.button-note { left: 493px; top: 529px; width: 110px; height: 16px; }
.residual-note { left: 178px; top: 365px; width: 107px; height: 17px; }
.stat-note { left: 165px; top: 474px; width: 122px; height: 28px; font-size: 9px; }
</style>
